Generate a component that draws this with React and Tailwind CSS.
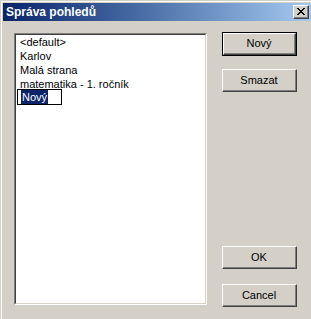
import React from "react";

const font = { fontFamily: '"Liberation Sans", Arial, sans-serif' };

// classic raised 3D button
const Button = ({ label, isDefault }) => {
  const inner = (
    <div className="border-t border-l border-t-white border-l-white border-b border-r border-b-[#404040] border-r-[#404040] w-full h-full">
      <div className="border-b border-r border-b-[#808080] border-r-[#808080] w-full h-full flex items-center justify-center text-[11px] text-black">
        {label}
      </div>
    </div>
  );
  if (isDefault) {
    return <div className="w-[75px] h-[24px] border border-black">{inner}</div>;
  }
  return <div className="w-[75px] h-[23px]">{inner}</div>;
};

const CloseIcon = () => (
  <svg width="8" height="7" viewBox="0 0 8 7" shapeRendering="crispEdges">
    <path
      d="M0 0h2v1h-2zM6 0h2v1h-2zM1 1h2v1h-2zM5 1h2v1h-2zM2 2h4v1h-4zM3 3h2v1h-2zM2 4h4v1h-4zM1 5h2v1h-2zM5 5h2v1h-2zM0 6h2v1h-2zM6 6h2v1h-2z"
      fill="#000"
    />
  </svg>
);

const items = ["<default>", "Karlov", "Malá strana", "matematika - 1. ročník"];

export default function App() {
  return (
    <div className="w-[311px] h-[319px] bg-[#d4d0c8] overflow-hidden" style={font}>
      <div className="pt-px pl-px h-full">
        <div className="border-t border-l border-t-white border-l-white h-full pt-px pl-px flex flex-col">
          {/* title bar */}
          <div className="h-[18px] bg-gradient-to-r from-[#0a246a] to-[#a6caf0] flex items-center pl-[3px] pr-[2px]">
            <span className="text-white text-[12px] font-bold flex-1">Správa pohledů</span>
            <div className="w-[16px] h-[14px] border-t border-l border-t-white border-l-white border-b border-r border-b-[#404040] border-r-[#404040] bg-[#d4d0c8]">
              <div className="w-full h-full border-b border-r border-b-[#808080] border-r-[#808080] flex items-center justify-center">
                <CloseIcon />
              </div>
            </div>
          </div>

          {/* body */}
          <div className="flex pl-[11px]">
            <div className="mt-[12px] w-[193px] h-[272px] border-t border-l border-t-[#808080] border-l-[#808080] border-b border-r border-b-white border-r-white">
              <div className="w-full h-full border-t border-l border-t-[#404040] border-l-[#404040] border-b border-r border-b-[#d4d0c8] border-r-[#d4d0c8] bg-white">
                {items.map((it) => (
                  <div key={it} className="h-[14px] leading-[14px] pl-[4px] text-[11px] text-black whitespace-nowrap">
                    {it}
                  </div>
                ))}
                <div className="-mt-[2px] ml-[1px] w-[45px] h-[16px] border border-black pl-[3px] flex items-center">
                  <span className="bg-[#0a246a] text-white text-[11px] leading-[14px] h-[14px] px-px">
                    Nový
                  </span>
                </div>
              </div>
            </div>

            <div className="ml-[15px] mt-[11px] flex flex-col">
              <Button label="Nový" isDefault />
              <div className="mt-[13px]">
                <Button label="Smazat" />
              </div>
              <div className="mt-[154px]">
                <Button label="OK" />
              </div>
              <div className="mt-[15px]">
                <Button label="Cancel" />
              </div>
            </div>
          </div>
        </div>
      </div>
    </div>
  );
}
